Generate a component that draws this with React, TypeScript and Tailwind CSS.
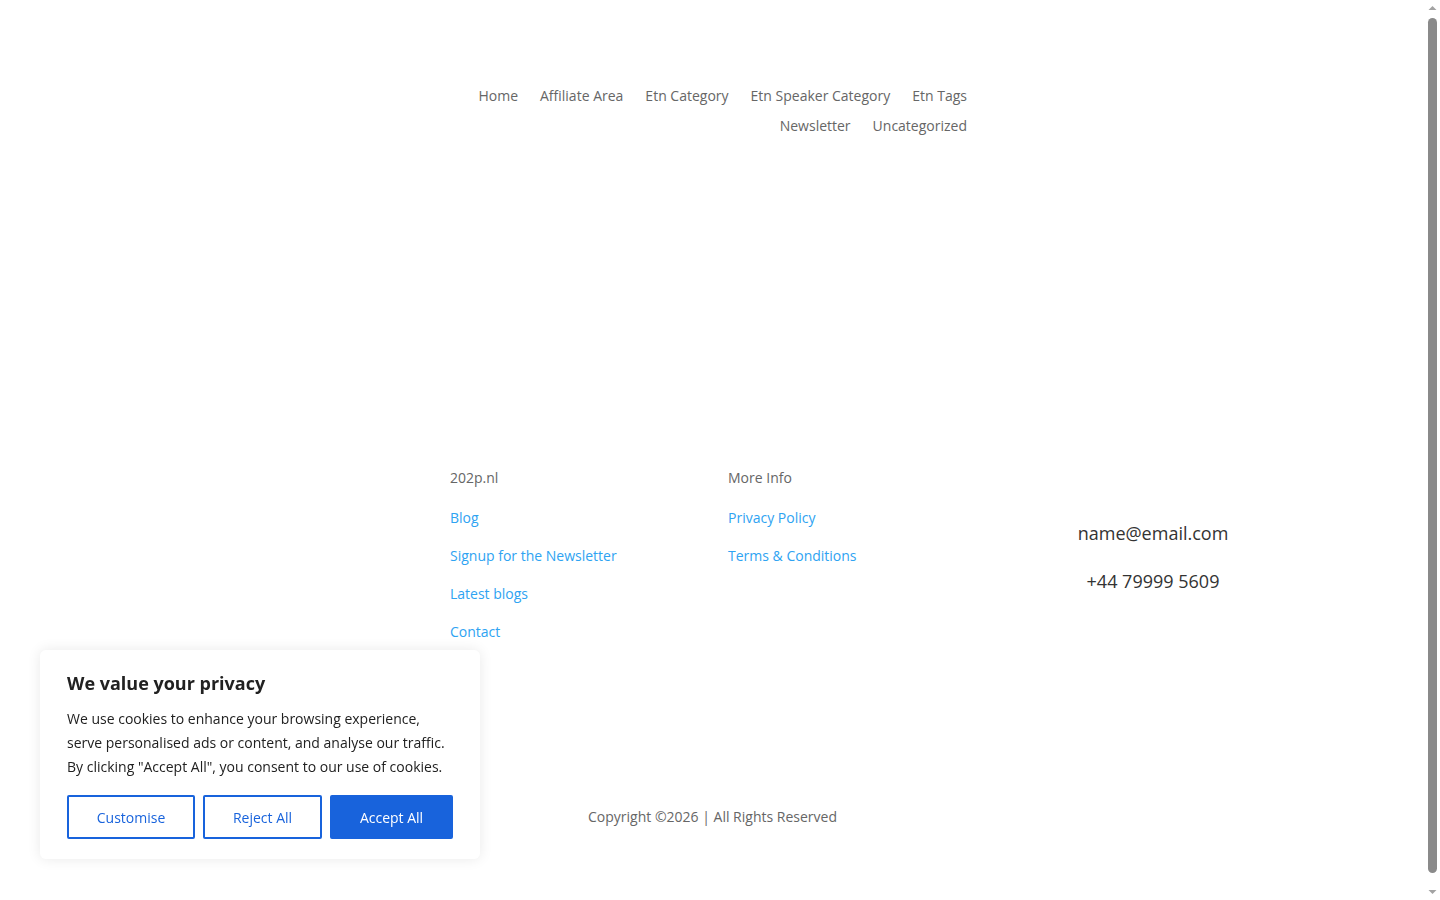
const NAV_LINKS = ['Home', 'Affiliate Area', 'Etn Category', 'Etn Speaker Category', 'Etn Tags', 'Newsletter', 'Uncategorized']

const SITE_LINKS = ['Blog', 'Signup for the Newsletter', 'Latest blogs', 'Contact']
const INFO_LINKS = ['Privacy Policy', 'Terms & Conditions']

function CookieBanner() {
  return (
    <div className="fixed left-[40px] top-[650px] w-[440px] rounded-md bg-white px-[27px] pt-[20px] pb-[20px] shadow-[0_0_14px_rgba(0,0,0,0.09)]">
      <p className="text-[18px] font-bold leading-[26px] text-[#212121]">We value your privacy</p>
      <p className="mt-[11px] text-[14px] leading-[24px] text-[#212121]">
        We use cookies to enhance your browsing experience, serve personalised ads or content, and analyse our traffic. By clicking "Accept All", you consent to our use of cookies.
      </p>
      <div className="mt-[16px] flex gap-[8px]">
        <button className="h-[44px] w-[128px] rounded-[2px] border-2 border-[#1863dc] bg-white text-[14px] text-[#1863dc]">Customise</button>
        <button className="h-[44px] w-[119px] rounded-[2px] border-2 border-[#1863dc] bg-white text-[14px] text-[#1863dc]">Reject All</button>
        <button className="h-[44px] w-[123px] rounded-[2px] border-2 border-[#1863dc] bg-[#1863dc] text-[14px] text-white">Accept All</button>
      </div>
    </div>
  )
}

// window scrollbar along the right edge
function ScrollBar() {
  return (
    <div className="fixed right-0 top-0 flex h-screen w-[15px] flex-col items-center bg-white">
      <svg width="15" height="16" viewBox="0 0 15 16" className="shrink-0">
        <path d="M3.5 10 L7.5 6 L11.5 10 Z" fill="#a3a3a3" />
      </svg>
      <div className="mt-[2px] mb-[11px] w-[9px] flex-1 rounded-full bg-[#8a8a8a]" />
      <svg width="15" height="16" viewBox="0 0 15 16" className="shrink-0">
        <path d="M3.5 6 L7.5 10 L11.5 6 Z" fill="#a3a3a3" />
      </svg>
    </div>
  )
}

export default function App() {
  return (
    <div className="h-screen overflow-hidden bg-white pr-[15px] font-['Open_Sans',sans-serif] text-[14px]">
      <div className="h-[915px]">
        {/* Header menu */}
        <header className="pt-[81px]">
          <nav className="ml-[447px] flex w-[520px] flex-wrap justify-end gap-x-[22px] leading-[30px] text-[#666]">
            {NAV_LINKS.map((l) => (
              <a key={l} href="#">{l}</a>
            ))}
          </nav>
        </header>

        {/* Footer columns */}
        <footer className="mt-[325px] flex">
          <div className="ml-[450px] w-[278px]">
            <p className="leading-[24px] text-[#666]">202p.nl</p>
            <ul className="mt-[16px] flex flex-col gap-[14px]">
              {SITE_LINKS.map((l) => (
                <li key={l} className="leading-[24px] text-[#2ea3f2]">{l}</li>
              ))}
            </ul>
          </div>
          <div className="w-[250px]">
            <p className="leading-[24px] text-[#666]">More Info</p>
            <ul className="mt-[16px] flex flex-col gap-[14px]">
              {INFO_LINKS.map((l) => (
                <li key={l} className="leading-[24px] text-[#2ea3f2]">{l}</li>
              ))}
            </ul>
          </div>
          <div className="ml-[75px] flex w-[200px] flex-col items-center pt-[52px] text-[18px] leading-[30px] text-[#333]">
            <p>name@email.com</p>
            <p className="mt-[18px]">+44 79999 5609</p>
          </div>
        </footer>

        <p className="mt-[161px] text-center leading-[24px] text-[#666]">Copyright ©2026 | All Rights Reserved</p>
      </div>

      <CookieBanner />
      <ScrollBar />
    </div>
  )
}
